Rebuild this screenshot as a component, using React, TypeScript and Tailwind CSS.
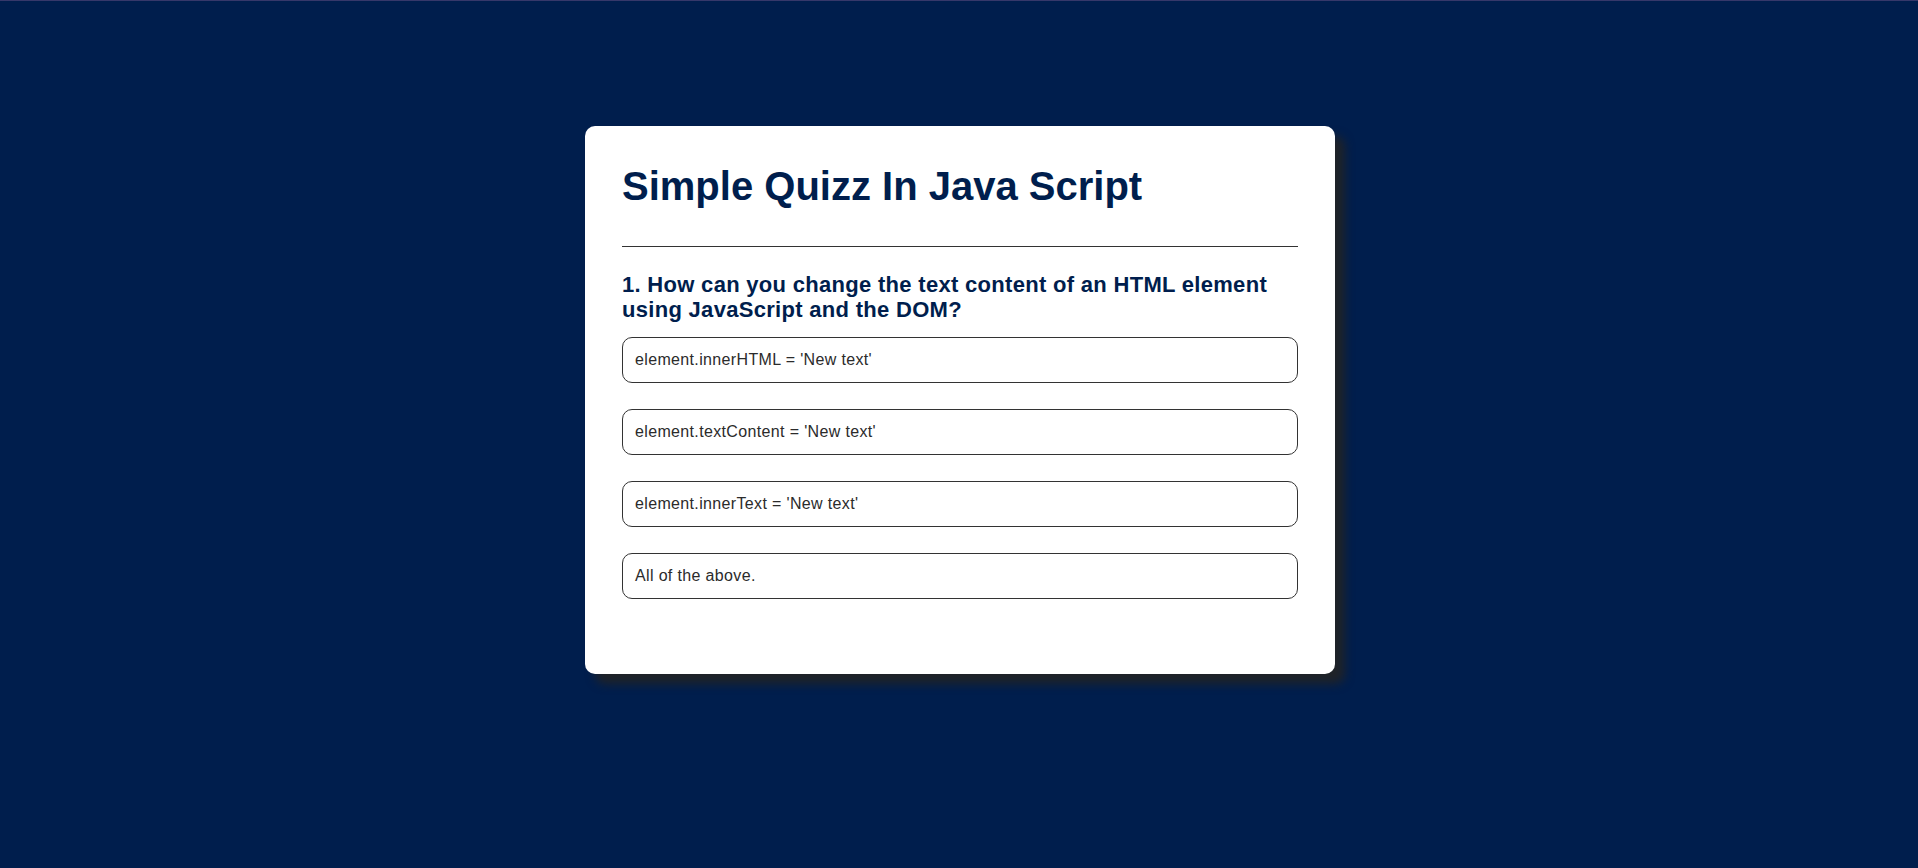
const options = [
  "element.innerHTML = 'New text'",
  "element.textContent = 'New text'",
  "element.innerText = 'New text'",
  "All of the above.",
];

export default function App() {
  return (
    <main className="min-h-screen border-t border-[#36386a] bg-[#001e4d] font-['Liberation_Sans',Arial,sans-serif]">
      <div className="flex justify-center pt-[125px] pl-[2px]">
        <div className="w-[750px] rounded-[10px] bg-white px-[37px] pt-[37px] pb-[75px] shadow-[10px_10px_10px_#1f2328]">
          <h1 className="text-[40px] font-bold leading-[46px] text-[#001e4d]">
            Simple Quizz In Java Script
          </h1>

          <hr className="mt-[37px] border-t border-[#333]" />

          <h2 className="mt-[25px] text-[22px] font-bold leading-[25px] tracking-[0.3px] text-[#001e4d]">
            1. How can you change the text content of an HTML element using
            JavaScript and the DOM?
          </h2>

          <ul className="mt-[15px] flex flex-col gap-[26px]">
            {options.map((opt) => (
              <li
                key={opt}
                className="rounded-[10px] border border-[#333] px-[12px] py-[13px] text-[16px] leading-[18px] tracking-[0.35px] text-[#2b2b2b]"
              >
                {opt}
              </li>
            ))}
          </ul>
        </div>
      </div>
    </main>
  );
}
